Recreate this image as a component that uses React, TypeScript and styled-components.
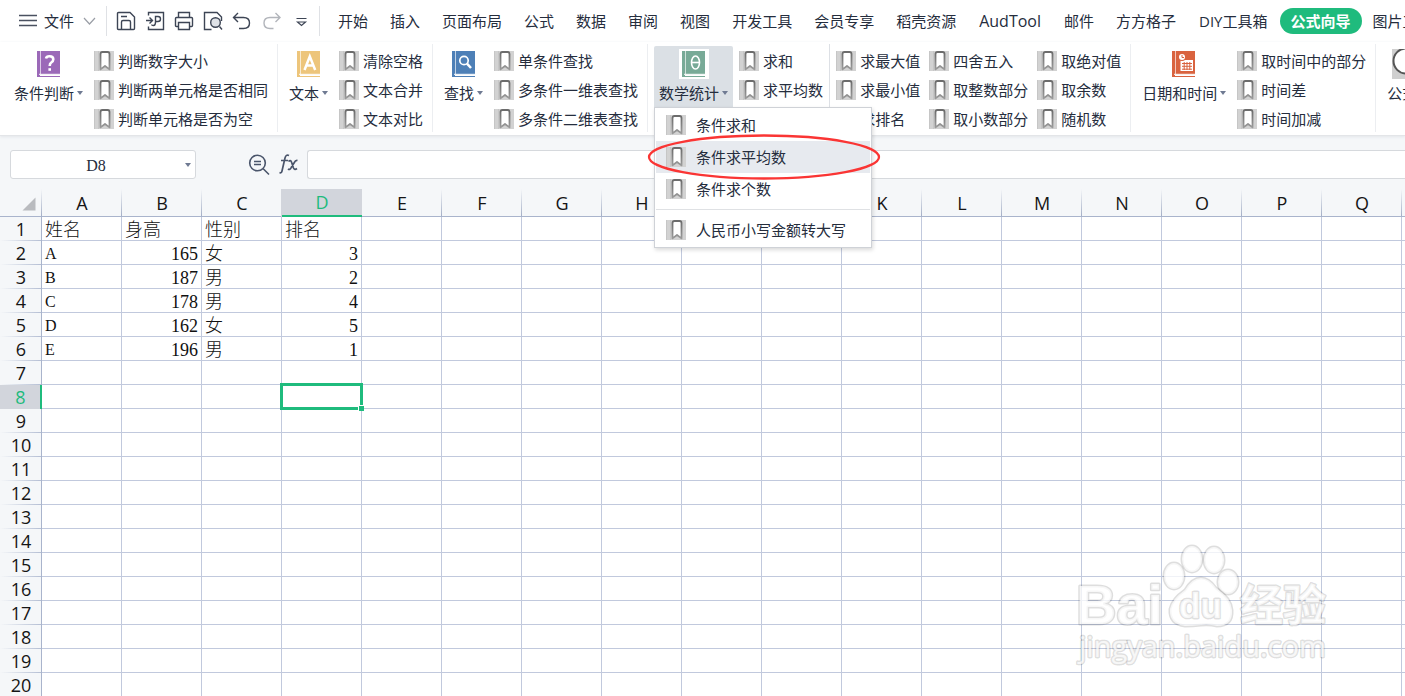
import React from 'react';
import styled, { createGlobalStyle, css } from 'styled-components';

const ui = '"Open Sans", "Noto Sans CJK SC", sans-serif';
const green = '#1fbb7d';
const ink = '#252d3d';

const GlobalStyle = createGlobalStyle`
  * { box-sizing: border-box; }
  body { margin: 0; background: #fff; overflow: hidden; }
  button, input { font: inherit; color: inherit; border: 0; background: none; padding: 0; margin: 0; }
`;

const Shell = styled.div`
  height: 100vh;
  overflow: hidden;
  display: flex;
  flex-direction: column;
  font: 15px/20px ${ui};
  color: ${ink};
  white-space: nowrap;
`;

const TopBar = styled.header`
  display: flex;
  align-items: center;
  height: 42px;
  flex: none;
  padding-left: 19px;
`;

const FileButton = styled.button`
  display: flex;
  align-items: center;
  gap: 7px;
  height: 30px;
  margin-right: 10px;
`;

const FileText = styled.span`
  margin-right: 2px;
`;

const BarLine = styled.span`
  width: 1px;
  height: 30px;
  flex: none;
  background: #dfe1e5;
`;

const QuickTools = styled.div`
  display: flex;
  align-items: center;
  gap: 9px;
  padding: 0 9px;
`;

const ToolButton = styled.button`
  display: flex;
  width: 20px;
  height: 20px;
`;

const Tabs = styled.nav`
  display: flex;
  align-items: center;
  padding-left: 7px;
`;

const Tab = styled.button<{ $on?: boolean; $latin?: boolean }>`
  height: 26px;
  padding: 0 ${p => (p.$latin ? 12 : 11)}px;
  flex: none;
  border-radius: 13px;
  ${p => p.$on && css`
    background: ${green};
    color: #fff;
    font-weight: 700;
  `}
`;

const LatinName = styled.span`
  font-size: 16px;
`;

const Ribbon = styled.section`
  position: relative;
  z-index: 2;
  display: flex;
  flex: none;
  height: 94px;
  padding: 2px 0 3px 3px;
  border-bottom: 1px solid #e3e5e8;
  background: #fff;
  box-shadow: 0 1px 3px #e2e5e9;
`;

const Group = styled.div<{ $tight?: boolean }>`
  display: flex;
  flex: none;
  align-items: flex-start;
  padding: 2px ${p => (p.$tight ? 6 : 9)}px 0 6px;
  border-right: 1px solid ${p => (p.$tight ? '#dde0e5' : '#eceef1')};
`;

const BigWrap = styled.div`
  position: relative;
  margin-right: 6px;
`;

const BigButton = styled.button<{ $open?: boolean }>`
  display: flex;
  flex-direction: column;
  align-items: center;
  gap: 4px;
  height: 61px;
  padding: 3px 5px 0;
  background: ${p => (p.$open ? '#dbe0e5' : 'transparent')};
  border-radius: 2px 2px 0 0;
`;

const BigLabel = styled.span`
  display: flex;
  align-items: center;
  gap: 3px;
`;

const Arrow = styled.i`
  border: 3px solid transparent;
  border-top: 4px solid #6f7a92;
  border-bottom: 0;
`;

const Columns = styled.div`
  display: flex;
  gap: 9px;
`;

const Column = styled.div`
  display: flex;
  flex-direction: column;
`;

const SmallButton = styled.button`
  display: flex;
  align-items: center;
  gap: 4px;
  height: 29px;
`;

const Menu = styled.div`
  position: absolute;
  top: 61px;
  left: 0;
  width: 218px;
  padding: 1px;
  border: 1px solid #cfd2d7;
  background: #fff;
  box-shadow: 1px 2px 4px rgba(0, 0, 0, 0.15);
`;

const MenuItem = styled.button<{ $on?: boolean }>`
  display: flex;
  align-items: center;
  gap: 10px;
  width: 100%;
  height: 32px;
  padding-left: 10px;
  background: ${p => (p.$on ? '#e7eaef' : 'transparent')};
`;

const MenuLine = styled.hr`
  height: 1px;
  margin: 4px 0;
  border: 0;
  background: #dfe1e4;
`;

const Highlight = styled.svg`
  position: absolute;
  left: -8px;
  top: 24px;
  pointer-events: none;
`;

const FormulaBar = styled.section`
  display: flex;
  align-items: center;
  flex: none;
  height: 53px;
  padding: 4px 0 0 10px;
  background: #f5f7f9;
`;

const NameBox = styled.div`
  display: flex;
  align-items: center;
  width: 186px;
  height: 29px;
  margin-right: 52px;
  border: 1px solid #d6d9dd;
  border-radius: 3px;
  background: #fff;
`;

const NameInput = styled.input`
  flex: 1;
  min-width: 0;
  height: 100%;
  padding-top: 2px;
  text-align: center;
  font: 16px/20px "Liberation Serif", serif;
  outline: none;
`;

const NameArrow = styled.button`
  display: flex;
  justify-content: center;
  width: 14px;
`;

const FxButton = styled.button`
  display: flex;
  margin-right: 8px;
`;

const FormulaInput = styled.input`
  flex: 1;
  height: 29px;
  border: 1px solid #d6d9dd;
  border-right: 0;
  border-radius: 3px 0 0 3px;
  background: #fff;
  outline: none;
`;

const SheetArea = styled.main`
  position: relative;
  flex: 1;
  min-height: 0;
  overflow: hidden;
`;

const Sheet = styled.table`
  table-layout: fixed;
  width: 0;
  border-collapse: separate;
  border-spacing: 0;
`;

const HeadCell = styled.th<{ $on?: boolean }>`
  height: 28px;
  padding: 0;
  font: 18px/24px ${ui};
  color: ${p => (p.$on ? green : '#151515')};
  background: ${p => (p.$on
    ? '#d2d5dc'
    : 'linear-gradient(to bottom, #f5f7f9, #a3aec6) right / 1px 100% no-repeat #f5f7f9')};
  border-bottom: ${p => (p.$on ? `2px solid ${green}` : '1px solid #a9b4cc')};
  box-shadow: ${p => (p.$on ? '-1px 0 #d2d5dc' : 'none')};
`;

const Corner = styled(HeadCell)`
  padding: 0 6px 5px 0;
  vertical-align: bottom;
  text-align: right;
  line-height: 0;
`;

const RowHead = styled.th<{ $on?: boolean }>`
  height: 24px;
  padding: 0 0 0 1px;
  font: 18px/22px ${ui};
  color: ${p => (p.$on ? green : '#151515')};
  background: ${p => (p.$on
    ? '#d2d5dc'
    : 'linear-gradient(to right, #f5f7f9, #b5bfd4) bottom / 100% 1px no-repeat #f5f7f9')};
  border-right: ${p => (p.$on ? `2px solid ${green}` : '1px solid #a9b4cc')};
`;

const Cell = styled.td<{ $align?: 'right' }>`
  position: relative;
  height: 24px;
  padding: 2px 3px 0;
  text-align: ${p => p.$align || 'left'};
  font: 300 18px/18px "Liberation Serif", "Noto Sans CJK SC", serif;
  color: #111;
  border-right: 1px solid #c1c9dd;
  border-bottom: 1px solid #c1c9dd;
`;

const Code = styled.span`
  font-size: 16px;
`;

const Selection = styled.span`
  position: absolute;
  z-index: 1;
  inset: -2px;
  border: 3px solid ${green};

  &::after {
    content: '';
    position: absolute;
    right: -4px;
    bottom: -4px;
    width: 5px;
    height: 5px;
    background: ${green};
    border: solid #fff;
    border-width: 1px 0 0 1px;
  }
`;

const Watermark = styled.svg`
  position: absolute;
  right: 70px;
  bottom: 24px;
  pointer-events: none;
`;

const BookmarkIcon = () => (
  <svg width="20" height="20" viewBox="0 0 20 20" aria-hidden="true">
    <defs>
      <linearGradient id="bm" x1="0" y1="0" x2="0" y2="1">
        <stop offset="0" stopColor="#6b6b6b" />
        <stop offset="1" stopColor="#9a9a9a" />
      </linearGradient>
    </defs>
    <path d="M0 0H20V20H0z" fill="#d2d2d2" />
    <path d="M0 0H1V20H0zM4 0H5V20H4z" fill="#c6c6c6" />
    <path d="M6.500 3Q6.500 1 8.500 1H13.500Q15.500 1 15.500 3V18.400L11 15L6.500 18.400z" fill="#fff" stroke="url(#bm)" strokeWidth="1.800" strokeLinejoin="round" />
  </svg>
);

type Mark = 'question' | 'letter' | 'search' | 'theta' | 'calendar' | 'globe';

const bookColor: Record<Mark, string> = {
  question: '#9b69b8',
  letter: '#edc57b',
  search: '#4e80b7',
  theta: '#78aa97',
  calendar: '#d9633f',
  globe: '#cfcfcf',
};

const BookIcon = ({ mark }: { mark: Mark }) => {
  if (mark === 'globe') {
    return (
      <svg width="30" height="30" viewBox="0 0 30 30" aria-hidden="true">
        <path d="M0 0H30V30H0z" fill="#cfcfcf" />
        <circle cx="14" cy="12" r="12.500" fill="#fff" stroke="#555" strokeWidth="2" />
      </svg>
    );
  }
  const c = bookColor[mark];
  return (
    <svg width="30" height="30" viewBox="0 0 30 30" aria-hidden="true">
      <path d="M0 0H30V30H0z" fill="#fff" />
      <path d="M3 2H26V25.500H6V27H26V28H3z" fill={c} />
      <path d="M6.500 2V25" stroke="#fff" strokeOpacity=".65" />
      <path d="M5 25.300H26" stroke="#fff" />
      {mark === 'question' && (
        <g fill="none" stroke="#fff" strokeWidth="2.600">
          <path d="M12 9.500Q12.500 7.300 15.500 7.300Q19.300 7.300 19.300 10.300Q19.300 12.300 17.300 13.500Q15.700 14.500 15.700 17" />
          <path d="M15.700 19.200V21.800" />
        </g>
      )}
      {mark === 'letter' && (
        <path d="M10.500 21L15.800 7.500L21.200 21M12.600 16.500H19" fill="none" stroke="#fff" strokeWidth="2.500" />
      )}
      {mark === 'search' && (
        <g fill="none" stroke="#fff">
          <circle cx="15" cy="11.500" r="4.200" strokeWidth="1.700" />
          <path d="M18 14.700L22 19" strokeWidth="2.500" />
        </g>
      )}
      {mark === 'theta' && (
        <g fill="none" stroke="#fff" strokeWidth="1.600">
          <ellipse cx="16.500" cy="13.500" rx="4" ry="6.500" />
          <path d="M12.500 13.500H20.500" />
        </g>
      )}
      {mark === 'calendar' && (
        <g>
          <path d="M11.500 11H24V22H11.500z" fill="#fff" />
          <path d="M13 14.500H23M13 17.300H23M13 20.200H23M15.200 13V21M18 13V21M20.800 13V21" stroke={c} />
          <circle cx="13" cy="8" r="4" fill={c} />
          <circle cx="13" cy="8" r="3" fill="#fff" />
          <path d="M13 6V8.500H15" fill="none" stroke={c} />
        </g>
      )}
    </svg>
  );
};

const quickIcons: [string, React.ReactNode][] = [
  ['保存', <path d="M1.500 2.500Q1.500 1.500 2.500 1.500H14L18.500 6V17.500Q18.500 18.500 17.500 18.500H2.500Q1.500 18.500 1.500 17.500zM5.500 18V11Q5.500 9.500 7 9.500H13Q14.500 9.500 14.500 11V18M5 5.500H11" />],
  ['输出为PDF', <path d="M3.500 4.500V1.500H18.500V18.500H3.500V15.500M1 9.500H7M4.500 6.500L7.500 9.500L4.500 12.500M10.500 12V5.500H13Q15.500 5.500 15.500 8T13 10.500H10.500M10.500 11Q10.500 14.500 8.500 14.500T7 13.500" />],
  ['打印', <path d="M4.500 6V1.500H15.500V6M4.500 15.500H2.500Q1.500 15.500 1.500 14.500V7.500Q1.500 6.500 2.500 6.500H17.500Q18.500 6.500 18.500 7.500V14.500Q18.500 15.500 17.500 15.500H15.500M4.500 11.500H15.500V18.500H4.500z" />],
  ['打印预览', <><path d="M8.500 18.500H1.500V1.500H14L18.500 6V10M16.500 15.500L19 18.500" /><circle cx="12.500" cy="11.500" r="4.800" fill="#dfe2e7" /></>],
  ['撤销', <path d="M6 2L1.500 6.500L6 11M2 6.500H11.500Q17.500 6.500 17.500 12T11.500 17.500H7" />],
  ['恢复', <path d="M14.500 2L19 6.500L14.500 11M18.500 6.500H9Q3 6.500 3 12T9 17.500H12.500" stroke="#b2b5bb" />],
  ['更多', <path d="M6.500 7.500H16.500M7.500 11L11.500 14.500L15.500 11z" strokeWidth="1.200" />],
];

const tabs = ['开始', '插入', '页面布局', '公式', '数据', '审阅', '视图', '开发工具', '会员专享', '稻壳资源', 'AudTool', '邮件', '方方格子', 'DIY工具箱', '公式向导', '图片工具'];

type RibbonGroup = { mark?: Mark; label?: string; open?: boolean; tight?: boolean; columns: string[][] };

const groups: RibbonGroup[] = [
  { mark: 'question', label: '条件判断', columns: [['判断数字大小', '判断两单元格是否相同', '判断单元格是否为空']] },
  { mark: 'letter', label: '文本', columns: [['清除空格', '文本合并', '文本对比']] },
  { mark: 'search', label: '查找', columns: [['单条件查找', '多条件一维表查找', '多条件二维表查找']] },
  { mark: 'theta', label: '数学统计', open: true, tight: true, columns: [['求和', '求平均数']] },
  {
    columns: [
      ['求最大值', '求最小值', '求排名'],
      ['四舍五入', '取整数部分', '取小数部分'],
      ['取绝对值', '取余数', '随机数'],
    ],
  },
  { mark: 'calendar', label: '日期和时间', columns: [['取时间中的部分', '时间差', '时间加减']] },
  { mark: 'globe', label: '公式', columns: [] },
];

const MathMenu = () => (
  <Menu role="menu">
    <MenuItem role="menuitem"><BookmarkIcon />条件求和</MenuItem>
    <MenuItem role="menuitem" $on><BookmarkIcon />条件求平均数</MenuItem>
    <MenuItem role="menuitem"><BookmarkIcon />条件求个数</MenuItem>
    <MenuLine />
    <MenuItem role="menuitem"><BookmarkIcon />人民币小写金额转大写</MenuItem>
    <Highlight width="234" height="50" viewBox="0 0 234 50" aria-hidden="true">
      <ellipse cx="117" cy="25" rx="115" ry="21.500" fill="none" stroke="#fa3534" strokeWidth="2.300" />
    </Highlight>
  </Menu>
);

// The last column has no letter: only its first pixels reach into the window.
const letters = [...'ABCDEFGHIJKLMNOPQ', ''];
const data: string[][] = [
  ['姓名', '身高', '性别', '排名'],
  ['A', '165', '女', '3'],
  ['B', '187', '男', '2'],
  ['C', '178', '男', '4'],
  ['D', '162', '女', '5'],
  ['E', '196', '男', '1'],
];
const rowNumbers = Array.from({ length: 20 }, (_, i) => i + 1);

export default function App() {
  return (
    <Shell>
      <GlobalStyle />
      <TopBar>
        <FileButton>
          <svg width="18" height="14" viewBox="0 0 18 14" aria-hidden="true">
            <path d="M0 1.500H18M0 6.500H18M0 11.500H18" stroke="#4a5160" strokeWidth="1.300" />
          </svg>
          <FileText>文件</FileText>
          <svg width="13" height="10" viewBox="0 0 13 10" aria-hidden="true">
            <path d="M1 2L6.500 8L12 2" fill="none" stroke="#9a9ea6" strokeWidth="1.200" />
          </svg>
        </FileButton>
        <BarLine />
        <QuickTools>
          {quickIcons.map(([name, art]) => (
            <ToolButton key={name} aria-label={name}>
              <svg width="20" height="20" viewBox="0 0 20 20" fill="none" stroke="#3d4555" strokeWidth="1.400" aria-hidden="true">{art}</svg>
            </ToolButton>
          ))}
        </QuickTools>
        <BarLine />
        <Tabs>
          {tabs.map(t => (
            <Tab key={t} $on={t === '公式向导'} $latin={/[A-Z]/.test(t)}>
              {/^[A-Za-z]+$/.test(t) ? <LatinName>{t}</LatinName> : t}
            </Tab>
          ))}
        </Tabs>
      </TopBar>

      <Ribbon>
        {groups.map((g, i) => (
          <Group key={i} $tight={g.tight}>
            {g.mark && (
              <BigWrap>
                <BigButton $open={g.open} aria-expanded={!!g.open}>
                  <BookIcon mark={g.mark} />
                  <BigLabel>{g.label}<Arrow /></BigLabel>
                </BigButton>
                {g.open && <MathMenu />}
              </BigWrap>
            )}
            <Columns>
              {g.columns.map(col => (
                <Column key={col[0]}>
                  {col.map(t => <SmallButton key={t}><BookmarkIcon />{t}</SmallButton>)}
                </Column>
              ))}
            </Columns>
          </Group>
        ))}
      </Ribbon>

      <FormulaBar>
        <NameBox>
          <NameInput aria-label="名称框" defaultValue="D8" />
          <NameArrow aria-label="展开名称框"><Arrow /></NameArrow>
        </NameBox>
        <FxButton aria-label="查找公式">
          <svg width="23" height="24" viewBox="0 0 23 24" fill="none" stroke="#4a556b" strokeWidth="1.600" aria-hidden="true">
            <circle cx="9.500" cy="10" r="7.800" />
            <path d="M15.200 15.700L21 21.500M6 8.500H13M6 11.500H13" />
          </svg>
        </FxButton>
        <FxButton aria-label="插入函数">
          <svg width="20" height="24" viewBox="0 0 20 24" fill="none" stroke="#4a556b" strokeWidth="1.700" aria-hidden="true">
            <path d="M10 2.500Q7 1 6 5L3 18Q2.500 20.500 .5 19.500M2 7.500H9M9.500 8.500Q11.500 6.500 12.500 9L14.500 15Q15.500 17.500 18 15.500M18.500 7.500Q16.500 7 15 10L12.500 14Q11 17.500 9 16" />
          </svg>
        </FxButton>
        <FormulaInput aria-label="编辑栏" />
      </FormulaBar>

      <SheetArea>
        <Sheet>
          <colgroup>
            <col width="42" />
            {letters.map(l => <col key={l} width="80" />)}
          </colgroup>
          <thead>
            <tr>
              <Corner>
                <svg width="14" height="14" viewBox="0 0 14 14" aria-hidden="true">
                  <path d="M13.500 .5V13.500H.5z" fill="#b9bbbf" />
                </svg>
              </Corner>
              {letters.map(l => <HeadCell key={l} scope="col" $on={l === 'D'}>{l}</HeadCell>)}
            </tr>
          </thead>
          <tbody>
            {rowNumbers.map(n => (
              <tr key={n}>
                <RowHead scope="row" $on={n === 8}>{n}</RowHead>
                {letters.map((l, c) => {
                  const value = data[n - 1]?.[c];
                  const numeric = !!value && /^\d+$/.test(value);
                  return (
                    <Cell key={l} $align={numeric ? 'right' : undefined}>
                      {value && /^[A-Z]$/.test(value) ? <Code>{value}</Code> : value}
                      {n === 8 && l === 'D' && <Selection />}
                    </Cell>
                  );
                })}
              </tr>
            ))}
          </tbody>
        </Sheet>
        <Watermark width="260" height="130" viewBox="0 0 260 130" aria-hidden="true">
          <g fill="#fff" fillOpacity=".75" stroke="#000" strokeOpacity=".13" strokeWidth="3" strokeLinejoin="round" paintOrder="stroke">
            <ellipse cx="99" cy="34" rx="10" ry="13" />
            <ellipse cx="117" cy="17" rx="10" ry="13" />
            <ellipse cx="139" cy="18" rx="10" ry="13" />
            <ellipse cx="153" cy="40" rx="10" ry="12" />
            <path d="M126 36Q134 36 141 46Q156 56 157 68Q158 84 142 84Q134 82 126 83Q118 84 110 84Q94 82 95 67Q97 57 110 48Q117 36 126 36z" />
            <text x="1" y="82" fontFamily="Liberation Sans, sans-serif" fontWeight="700" fontSize="56">Bai</text>
            <text x="104" y="76" fontFamily="Liberation Sans, sans-serif" fontWeight="700" fontSize="35">du</text>
            <text x="165" y="79" fontFamily="Noto Sans CJK SC, sans-serif" fontWeight="700" fontSize="43">经验</text>
            <text x="4" y="115" fontFamily="Open Sans, sans-serif" fontSize="29" fontWeight="500">jingyan.baidu.com</text>
          </g>
        </Watermark>
      </SheetArea>
    </Shell>
  );
}
